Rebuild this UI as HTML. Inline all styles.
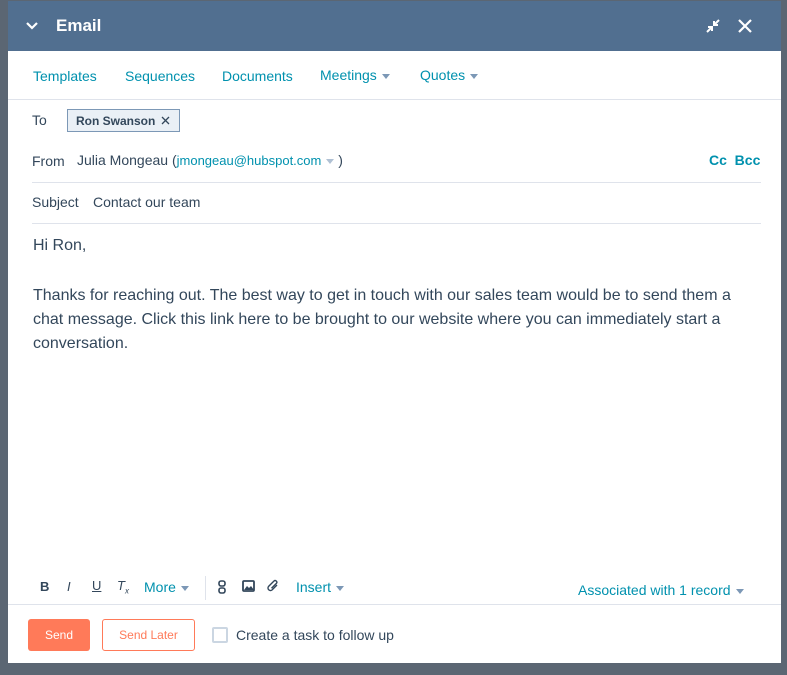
<!DOCTYPE html>
<html><head><style>
*{margin:0;padding:0;box-sizing:border-box}
body{width:787px;height:675px;overflow:hidden;background:#5b6673;font-family:"Liberation Sans",sans-serif;position:relative;color:#33475b}
.m{position:absolute;left:8px;top:1px;width:773px;height:662px;background:#fff}
.hd{position:absolute;left:0;top:0;width:773px;height:50px;background:#516f90;color:#fff}
.a{position:absolute;white-space:nowrap}
.t{color:#0091ae;font-size:14px}
.caret{display:inline-block;border-left:4px solid transparent;border-right:4px solid transparent;border-top:5px solid #7c98b6;vertical-align:middle;margin-left:5px}
.line{position:absolute;height:1px;background:#dfe3eb}
</style></head><body>
<div class="m">
<div class="hd">
<svg class="a" style="left:18px;top:20px" width="12" height="10" viewBox="0 0 12 10"><path d="M1 2l5 5 5-5" stroke="#fff" stroke-width="2.2" fill="none"/></svg>
<div class="a" style="left:48px;top:15px;font-size:17px;font-weight:bold">Email</div>
<svg class="a" style="left:698px;top:18px" width="14" height="14" viewBox="0 0 14 14"><path d="M13 1L8 6M8 2v4h4M1 13l5-5M2 8h4v4" stroke="#fff" stroke-width="2" fill="none"/></svg>
<svg class="a" style="left:730px;top:18px" width="14" height="14" viewBox="0 0 14 14"><path d="M1 1l12 12M13 1L1 13" stroke="#fff" stroke-width="2.2"/></svg>
</div>
<div class="a t" style="left:25px;top:67px">Templates</div>
<div class="a t" style="left:117px;top:67px">Sequences</div>
<div class="a t" style="left:214px;top:67px">Documents</div>
<div class="a t" style="left:312px;top:66px">Meetings<span class="caret"></span></div>
<div class="a t" style="left:412px;top:66px">Quotes<span class="caret"></span></div>
<div class="line" style="left:0;top:98px;width:773px"></div>
<div class="a" style="left:24px;top:111px;font-size:14px">To</div>
<div class="a" style="left:59px;top:108px;width:113px;height:23px;border:1px solid #7c98b6;background:#eaf0f6;font-size:12px;font-weight:bold;padding:4px 0 0 8px">Ron Swanson</div>
<svg class="a" style="left:153px;top:115px" width="9" height="9" viewBox="0 0 9 9"><path d="M1 1l7 7M8 1L1 8" stroke="#33475b" stroke-width="1.3"/></svg>
<div class="a" style="left:24px;top:152px;font-size:14px">From</div>
<div class="a" style="left:69px;top:151px;font-size:14px">Julia Mongeau (<span style="color:#0091ae;font-size:13px">jmongeau@hubspot.com</span><span class="caret" style="border-top-color:#b0c1d4"></span> )</div>
<div class="a t" style="left:701px;top:151px;font-weight:bold;font-size:14px">Cc&nbsp; Bcc</div>
<div class="line" style="left:24px;top:181px;width:729px"></div>
<div class="a" style="left:24px;top:193px;font-size:14px">Subject</div>
<div class="a" style="left:85px;top:193px;font-size:14px">Contact our team</div>
<div class="line" style="left:24px;top:222px;width:729px"></div>
<div class="a" style="left:25px;top:236px;font-size:16px">Hi Ron,</div>
<div class="a" style="left:25px;top:283px;font-size:16px;line-height:24px">Thanks for reaching out. The best way to get in touch with our sales team would be to send them a<br>chat message. Click this link here to be brought to our website where you can immediately start a<br>conversation.</div>
<div class="a" style="left:32px;top:578px;font-size:13px;font-weight:bold">B</div>
<div class="a" style="left:59px;top:578px;font-size:13px;font-style:italic">I</div>
<div class="a" style="left:84px;top:577px;font-size:13px;text-decoration:underline">U</div>
<div class="a" style="left:109px;top:577px;font-size:13px;font-style:italic">T<sub style="font-size:8px">x</sub></div>
<div class="a t" style="left:136px;top:578px">More<span class="caret"></span></div>
<div class="a" style="left:197px;top:575px;width:1px;height:24px;background:#dfe3eb"></div>
<svg class="a" style="left:210px;top:579px" width="8" height="14" viewBox="0 0 8 14"><rect x="1" y="1" width="6" height="5" rx="2" stroke="#33475b" stroke-width="1.6" fill="none"/><rect x="1" y="8" width="6" height="5" rx="2" stroke="#33475b" stroke-width="1.6" fill="none"/></svg>
<svg class="a" style="left:234px;top:579px" width="13" height="12" viewBox="0 0 13 12"><rect x="1" y="1" width="11" height="10" rx="1" stroke="#33475b" stroke-width="1.8" fill="none"/><path d="M2 10l3-4 2 2 2-2 3 4z" fill="#33475b"/></svg>
<svg class="a" style="left:259px;top:578px" width="12" height="14" viewBox="0 0 12 14"><path d="M10 6l-5 5a2.5 2.5 0 0 1-3.5-3.5L7 2a1.7 1.7 0 0 1 2.4 2.4L4.5 9.3" stroke="#33475b" stroke-width="1.4" fill="none"/></svg>
<div class="a t" style="left:288px;top:578px">Insert<span class="caret"></span></div>
<div class="a t" style="left:570px;top:581px">Associated with 1 record<span class="caret"></span></div>
<div class="line" style="left:0;top:603px;width:773px"></div>
<div class="a" style="left:20px;top:618px;width:62px;height:32px;background:#ff7a59;border-radius:3px;color:#fff;font-size:12px;text-align:center;line-height:32px">Send</div>
<div class="a" style="left:94px;top:618px;width:93px;height:32px;border:1px solid #ff7a59;border-radius:3px;color:#ff7a59;font-size:12px;text-align:center;line-height:30px">Send Later</div>
<div class="a" style="left:204px;top:626px;width:16px;height:16px;border:2px solid #cbd6e2;border-radius:2px"></div>
<div class="a" style="left:228px;top:626px;font-size:14px">Create a task to follow up</div>
</div>
</body></html>
